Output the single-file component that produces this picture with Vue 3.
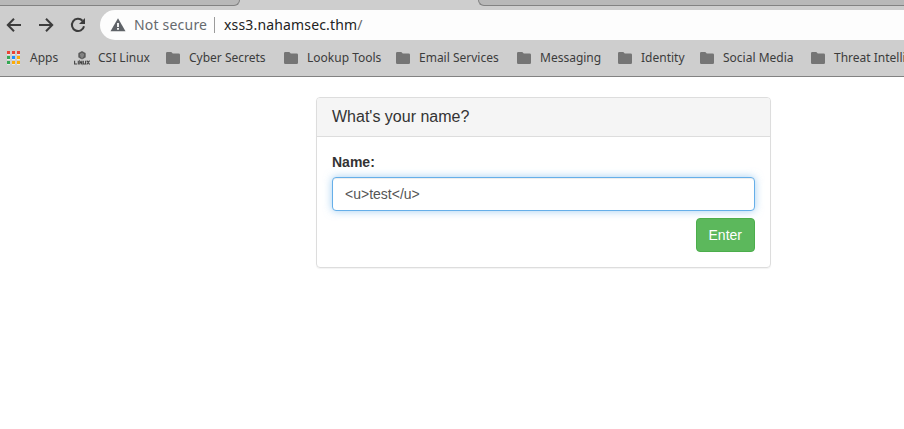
<script setup>
import { ref } from 'vue'

const name = ref('<u>test</u>')
const folders = [
  { label: 'Cyber Secrets', width: 101 },
  { label: 'Lookup Tools', width: 95 },
  { label: 'Email Services', width: 104 },
  { label: 'Messaging', width: 84 },
  { label: 'Identity', width: 65 },
  { label: 'Social Media', width: 94 },
  { label: 'Threat Intelli', width: 93 },
]
const appColors = [
  '#ea4335', '#ea4335', '#ea4335',
  '#34a853', '#1a8cff', '#fbab08',
  '#34a853', '#fbab08', '#fbab08',
]
</script>

<template>
  <div class="window">
    <header class="chrome">
      <div class="tabs">
        <div class="tab tab-left"></div>
        <div class="tab tab-right"></div>
      </div>
      <div class="toolbar">
        <svg class="nav" width="16" height="16" viewBox="0 0 16 16">
          <path d="M15 8H2M8 1.8L1.8 8L8 14.2" />
        </svg>
        <svg class="nav" width="16" height="16" viewBox="0 0 16 16">
          <path d="M1 8H14M8 1.8L14.2 8L8 14.2" />
        </svg>
        <svg class="nav" width="16" height="16" viewBox="0 0 16 16">
          <path d="M14 9.2A6.1 6.1 0 1 1 12.5 3.8" />
          <path class="solid" d="M15 1V7H9Z" />
        </svg>
        <div class="omnibox">
          <svg class="warn" width="16" height="14" viewBox="0 0 16 14">
            <path d="M8 0.3L15.5 13.3H0.5Z" fill="#5f6368" />
            <path d="M7.1 5H8.9V9H7.1ZM7.1 10H8.9V11.7H7.1Z" fill="#fff" />
          </svg>
          <span class="insecure">Not secure</span>
          <span class="divider"></span>
          <span class="url">xss3.nahamsec.thm<span class="path">/</span></span>
        </div>
      </div>
      <nav class="bookmarks">
        <div class="bookmark apps">
          <div class="grid">
            <i v-for="(c, i) in appColors" :key="i" :style="{ background: c }"></i>
          </div>
          <span>Apps</span>
        </div>
        <div class="bookmark csi">
          <svg width="16" height="16" viewBox="0 0 16 16">
            <path d="M8 1L11.7 3V7.4L8 9.6L4.3 7.4V3Z" fill="#757575" />
            <path d="M5.2 3.5L8 2L10.8 3.6V6.9L8 8.6L5.2 6.9Z" fill="none" stroke="#505050" stroke-width=".9" />
            <path d="M6.4 4.7L8 3.8L9.6 4.8L8 6.2ZM8 6.2V9" fill="none" stroke="#a5a5a5" stroke-width=".5" />
            <path d="M.6 10.7V14H3M4.3 10.7V14.5M5.8 14.5V11.2L7.8 13.8V10.7M9.3 10.7V14H11.6V10.7M12.8 10.7L15.6 14.5M15.6 10.7L12.8 14.5" fill="none" stroke="#444" stroke-width="1.1" />
          </svg>
          <span>CSI Linux</span>
        </div>
        <div v-for="f in folders" :key="f.label" class="bookmark" :style="{ width: f.width + 'px' }">
          <svg width="14" height="12" viewBox="0 0 14 12">
            <path d="M1.3 0H5.3L6.8 1.5H12.7Q14 1.5 14 2.8V10.7Q14 12 12.7 12H1.3Q0 12 0 10.7V1.3Q0 0 1.3 0Z" fill="#757575" />
          </svg>
          <span>{{ f.label }}</span>
        </div>
      </nav>
    </header>
    <main class="page">
      <section class="panel">
        <h3 class="heading">What's your name?</h3>
        <form class="body" @submit.prevent>
          <label for="name">Name:</label>
          <input id="name" v-model="name" type="text" spellcheck="false" />
          <div class="actions">
            <button type="submit">Enter</button>
          </div>
        </form>
      </section>
    </main>
  </div>
</template>

<style>
body {
  margin: 0;
  background: #fff;
}
</style>

<style scoped>
.window {
  width: 904px;
  height: 429px;
  overflow: hidden;
  background: #fff;
}
.chrome {
  box-sizing: border-box;
  height: 77px;
  background: #cecece;
  border-bottom: 1px solid #828282;
  font-family: "Noto Sans", sans-serif;
}
.tabs {
  display: flex;
  justify-content: space-between;
  height: 6px;
}
.tab {
  box-sizing: border-box;
  height: 6px;
  background: #b8b8b8;
  border-bottom: 1px solid #828282;
}
.tab-left {
  width: 240px;
  border-right: 1px solid #828282;
  border-bottom-right-radius: 7px;
}
.tab-right {
  width: 426px;
  border-left: 1px solid #828282;
  border-bottom-left-radius: 7px;
}
.toolbar {
  display: flex;
  align-items: center;
  gap: 16px;
  height: 30px;
  margin-top: 4px;
  padding-left: 6px;
}
.nav {
  flex: none;
  fill: none;
  stroke: #3c3c3c;
  stroke-width: 2;
}
.nav .solid {
  fill: #3c3c3c;
  stroke: none;
}
.omnibox {
  display: flex;
  flex: 1;
  align-items: center;
  box-sizing: border-box;
  height: 30px;
  margin-left: -2px;
  padding-left: 10px;
  background: #fdfdfd;
  border-radius: 15px 0 0 15px;
  font-size: 14px;
  line-height: 20px;
  white-space: nowrap;
}
.warn {
  margin-right: 8px;
}
.insecure {
  width: 73px;
  color: #666a6e;
  letter-spacing: 0.2px;
}
.divider {
  width: 1px;
  height: 16px;
  margin: 0 9px 0 7px;
  background: #9b9b9b;
}
.url {
  color: #222;
  letter-spacing: 0.16px;
}
.path {
  color: #6a6a6a;
}
.bookmarks {
  display: flex;
  align-items: center;
  gap: 17px;
  height: 36px;
  padding-left: 7px;
  color: #3c3c3c;
  font-size: 12px;
  line-height: 18px;
  white-space: nowrap;
}
.bookmark {
  display: flex;
  flex: none;
  align-items: center;
  gap: 9px;
}
.bookmark svg {
  flex: none;
}
.apps {
  gap: 10px;
  width: 50px;
}
.csi {
  gap: 8px;
  width: 75px;
}
.grid {
  display: grid;
  grid-template-columns: repeat(3, 3px);
  grid-auto-rows: 3px;
  gap: 2px;
  margin-bottom: 1px;
}
.grid i {
  box-shadow: 0 1px 0 rgba(255, 255, 255, 0.55);
}
.page {
  display: flex;
  padding: 20px 0 0 316px;
  font-family: "Liberation Sans", Arial, sans-serif;
}
.panel {
  box-sizing: border-box;
  width: 455px;
  height: 171px;
  border: 1px solid #ddd;
  border-radius: 4px;
  box-shadow: 0 1px 1px rgba(0, 0, 0, 0.05);
}
.heading {
  box-sizing: border-box;
  height: 39px;
  margin: 0;
  padding: 10px 15px;
  background: #f5f5f5;
  border-bottom: 1px solid #ddd;
  border-radius: 3px 3px 0 0;
  color: #333;
  font-size: 16px;
  font-weight: 400;
  line-height: 18px;
}
.body {
  padding: 15px;
  color: #333;
  font-size: 14px;
  line-height: 20px;
}
label {
  display: block;
  margin-bottom: 5px;
  font-weight: 700;
}
input {
  display: block;
  box-sizing: border-box;
  width: 100%;
  height: 34px;
  padding: 6px 12px;
  border: 1px solid #66afe9;
  border-radius: 4px;
  outline: 0;
  background: #fff;
  box-shadow: inset 0 1px 1px rgba(0, 0, 0, 0.075), 0 0 8px rgba(102, 175, 233, 0.6);
  color: #555;
  font: 14px/20px "Liberation Sans", Arial, sans-serif;
}
.actions {
  display: flex;
  justify-content: flex-end;
  margin-top: 7px;
}
button {
  box-sizing: border-box;
  height: 34px;
  padding: 6px 12px;
  border: 1px solid #4cae4c;
  border-radius: 4px;
  background: #5cb85c;
  color: #fff;
  font: 14px/20px "Liberation Sans", Arial, sans-serif;
}
</style>
